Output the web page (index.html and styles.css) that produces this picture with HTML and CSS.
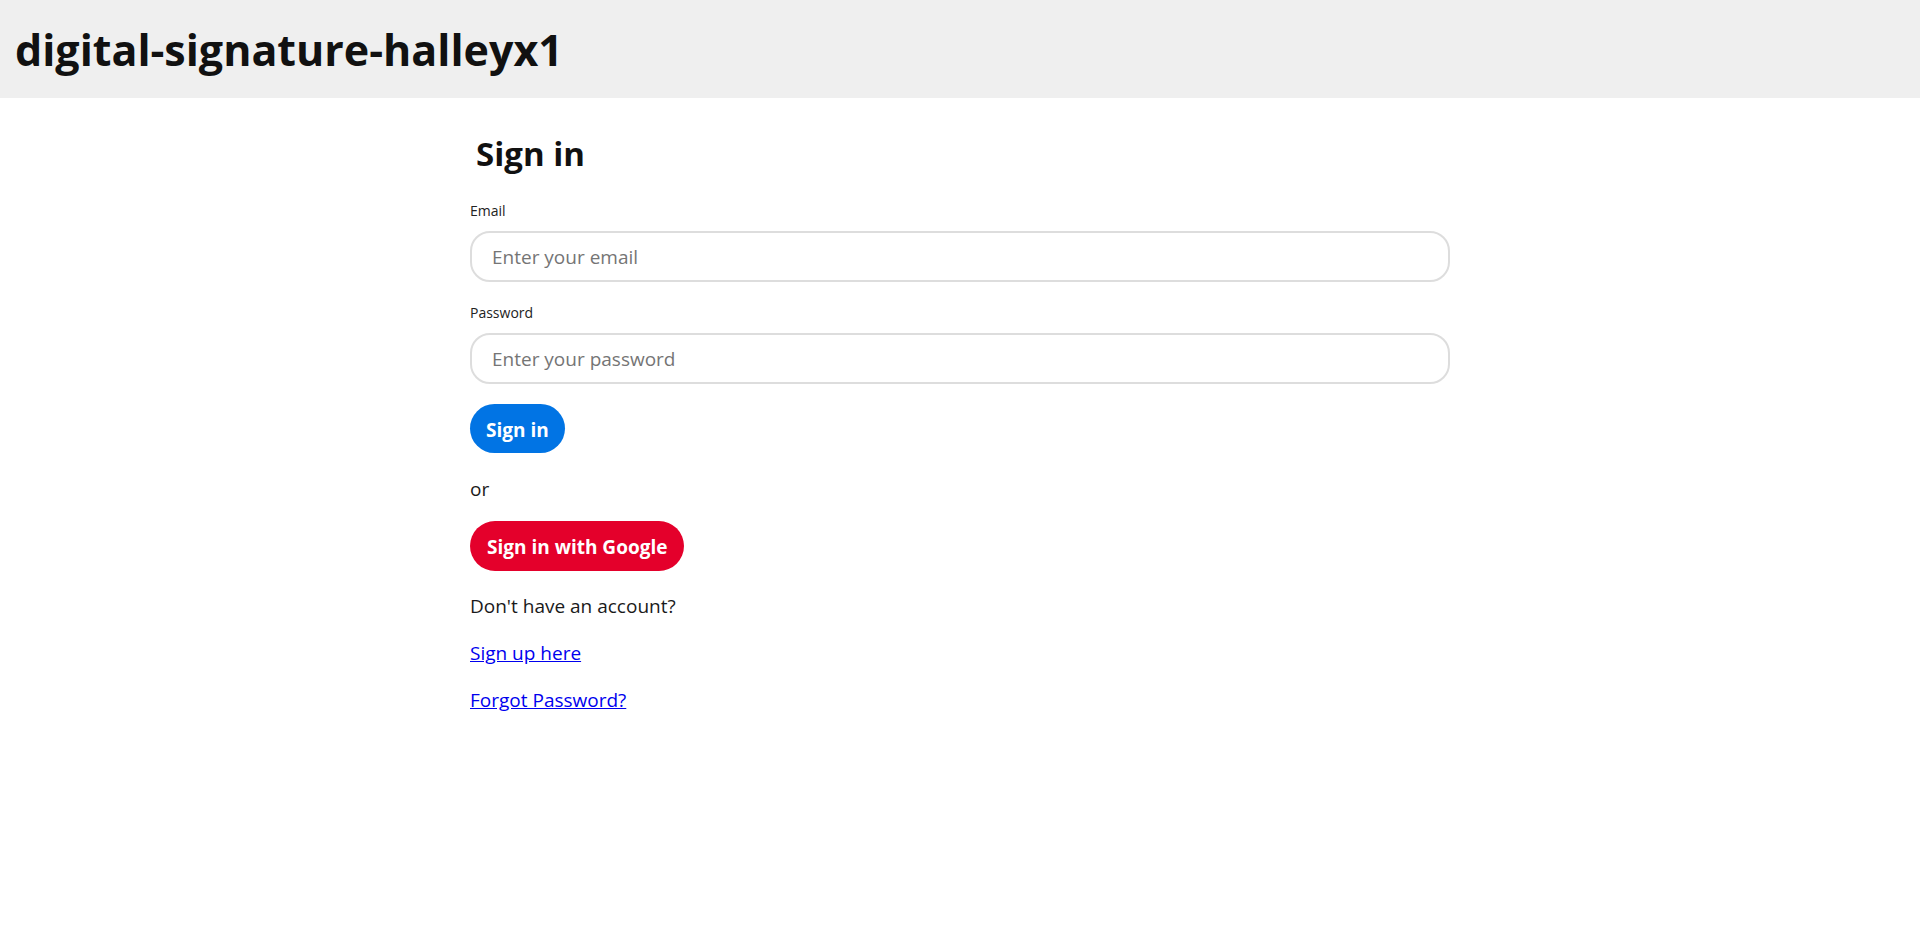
FILE: index.html
```html
<!DOCTYPE html>
<html lang="en">
<head>
<meta charset="utf-8">
<title>digital-signature-halleyx1</title>
<link rel="stylesheet" href="styles.css">
</head>
<body>
<header class="topbar">
  <h1 class="brand">digital-signature-halleyx1</h1>
</header>
<main class="page">
  <form class="signin">
    <h2 class="signin-title">Sign in</h2>
    <label class="field-label" for="email">Email</label>
    <input class="field-input" id="email" type="email" placeholder="Enter your email">
    <label class="field-label" for="password">Password</label>
    <input class="field-input" id="password" type="password" placeholder="Enter your password">
    <button class="btn btn-primary" type="button">Sign in</button>
    <p class="text or">or</p>
    <button class="btn btn-google" type="button">Sign in with Google</button>
    <p class="text">Don't have an account?</p>
    <p class="text"><a class="link" href="#">Sign up here</a></p>
    <p class="text"><a class="link" href="#">Forgot Password?</a></p>
  </form>
</main>
</body>
</html>
```
FILE: styles.css
```css
* { box-sizing: border-box; }
html, body {
  margin: 0;
  padding: 0;
  background: #ffffff;
  font-family: "Open Sans", "Noto Sans", sans-serif;
  color: #1a1a1a;
}
.topbar {
  background: #efefef;
  height: 98px;
  display: flex;
  align-items: center;
  padding-left: 15px;
}
.brand {
  margin: 0;
  font-size: 43px;
  font-weight: 700;
  color: #111111;
}
.page {
  width: 980px;
  margin: 0 auto;
}
.signin {
  display: flex;
  flex-direction: column;
  align-items: flex-start;
}
.signin-title {
  margin: 36px 0 0 6px;
  font-size: 33px;
  line-height: 40px;
  font-weight: 700;
  color: #111111;
}
.field-label {
  margin-top: 28px;
  font-size: 14px;
  line-height: 18px;
  color: #222222;
}
.field-label + .field-input { margin-top: 11px; }
.field-input + .field-label { margin-top: 22px; }
.field-input {
  width: 100%;
  height: 51px;
  border: 2px solid #dddddd;
  border-radius: 20px;
  padding: 0 20px;
  font-family: inherit;
  font-size: 19px;
  color: #222222;
  outline: none;
  background: #ffffff;
}
.field-input::placeholder { color: #757575; }
.btn {
  border: none;
  border-radius: 25px;
  height: 49px;
  padding: 2px 16px 0;
  font-family: inherit;
  font-size: 19px;
  font-weight: 700;
  color: #ffffff;
  cursor: pointer;
}
.btn-primary {
  margin-top: 20px;
  background: #0174e4;
}
.btn-google {
  background: #e4002b;
  height: 50px;
  padding: 2px 17px 0;
}
.text {
  margin: 0;
  font-size: 19px;
  line-height: 26px;
  color: #1a1a1a;
}
.or { margin: 23px 0 19px; }
.btn-google + .text { margin-top: 22px; }
.text + .text { margin-top: 21px; }
.link { color: #0000ee; }
```
